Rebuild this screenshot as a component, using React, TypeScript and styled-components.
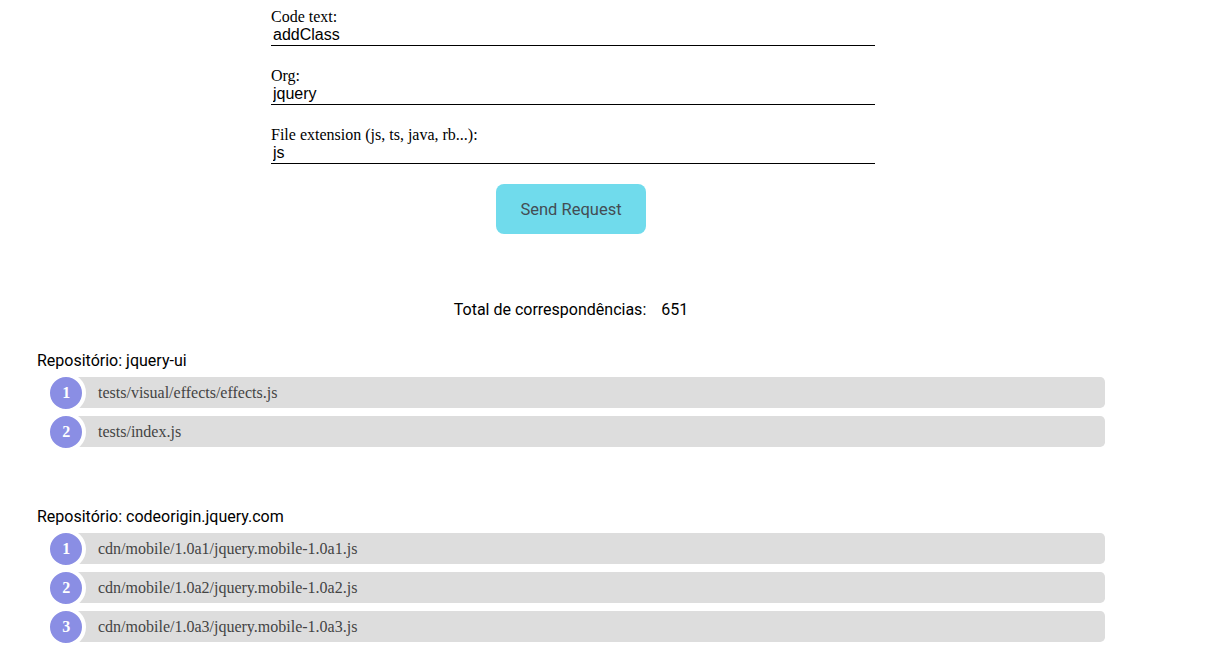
import React from "react";
import styled, { createGlobalStyle } from "styled-components";

const GlobalStyle = createGlobalStyle`
  html, body { background: #fff; }
  body {
    margin: 8px;
    font-family: "Liberation Serif", "Times New Roman", serif;
    font-size: 16px;
    color: #000;
  }
`;

const Page = styled.div`
  width: 1126px;
`;

const Form = styled.form`
  width: 604px;
  margin-left: 263px;
  display: flex;
  flex-direction: column;
  gap: 21px;
`;

const Field = styled.div`
  display: flex;
  flex-direction: column;
`;

const Label = styled.label`
  display: block;
  font-family: "Liberation Serif", "Times New Roman", serif;
  font-size: 16px;
  line-height: 17px;
  height: 17px;
`;

const Input = styled.input`
  box-sizing: border-box;
  width: 100%;
  height: 21px;
  border: none;
  border-bottom: 1px solid #000;
  outline: none;
  padding: 0 2px 1px 2px;
  margin: 0;
  font-family: "Liberation Sans", Arial, sans-serif;
  font-size: 16px;
  color: #000;
  background: transparent;
`;

const ButtonRow = styled.div`
  display: flex;
  justify-content: center;
  margin-top: 20px;
`;

const SendButton = styled.button`
  width: 150px;
  height: 50px;
  border: none;
  border-radius: 8px;
  background: #70dbec;
  color: #434d54;
  font-family: Roboto, "Liberation Sans", sans-serif;
  font-size: 16.5px;
  cursor: pointer;
`;

const Total = styled.div`
  display: flex;
  justify-content: center;
  gap: 15px;
  margin-top: 66px;
  font-family: Roboto, "Liberation Sans", sans-serif;
  font-size: 16px;
  line-height: 19px;
`;

const RepoGroup = styled.section<{ $first?: boolean }>`
  margin-top: ${(p) => (p.$first ? "32px" : "60px")};
  margin-left: 29px;
`;

const RepoTitle = styled.div`
  font-family: Roboto, "Liberation Sans", sans-serif;
  font-size: 16px;
  line-height: 19px;
  margin-bottom: 7px;
`;

const List = styled.ol`
  list-style: none;
  margin: 0;
  padding: 0 0 0 29px;
  width: 1039px;
  counter-reset: li;
  font-family: "Liberation Serif", "Times New Roman", serif;
  font-size: 16px;
`;

const Item = styled.li`
  position: relative;
  display: block;
  box-sizing: border-box;
  height: 31px;
  line-height: 18px;
  padding: 6.5px 6.4px 6.5px 32px;
  margin: 0 0 8px 0;
  background: #ddd;
  color: #444;
  border-radius: 4.8px;
  counter-increment: li;

  &::before {
    content: counter(li);
    position: absolute;
    left: -19.8px;
    top: 50%;
    margin-top: -19.8px;
    width: 32px;
    height: 32px;
    line-height: 32px;
    border: 4.8px solid #fff;
    border-radius: 50%;
    background: #8a8ee4;
    color: #fff;
    text-align: center;
    font-weight: bold;
  }
`;

const repos = [
  {
    name: "jquery-ui",
    files: ["tests/visual/effects/effects.js", "tests/index.js"],
  },
  {
    name: "codeorigin.jquery.com",
    files: [
      "cdn/mobile/1.0a1/jquery.mobile-1.0a1.js",
      "cdn/mobile/1.0a2/jquery.mobile-1.0a2.js",
      "cdn/mobile/1.0a3/jquery.mobile-1.0a3.js",
    ],
  },
];

export default function App() {
  return (
    <>
      <GlobalStyle />
      <Page>
        <Form onSubmit={(e) => e.preventDefault()}>
          <Field>
            <Label htmlFor="code">Code text:</Label>
            <Input id="code" defaultValue="addClass" />
          </Field>
          <Field>
            <Label htmlFor="org">Org:</Label>
            <Input id="org" defaultValue="jquery" />
          </Field>
          <Field>
            <Label htmlFor="ext">File extension (js, ts, java, rb...):</Label>
            <Input id="ext" defaultValue="js" />
          </Field>
        </Form>
        <ButtonRow>
          <SendButton type="button">Send Request</SendButton>
        </ButtonRow>
        <Total>
          <span>Total de correspondências:</span>
          <span>651</span>
        </Total>
        {repos.map((r, i) => (
          <RepoGroup key={r.name} $first={i === 0}>
            <RepoTitle>Repositório: {r.name}</RepoTitle>
            <List>
              {r.files.map((f) => (
                <Item key={f}>{f}</Item>
              ))}
            </List>
          </RepoGroup>
        ))}
      </Page>
    </>
  );
}
